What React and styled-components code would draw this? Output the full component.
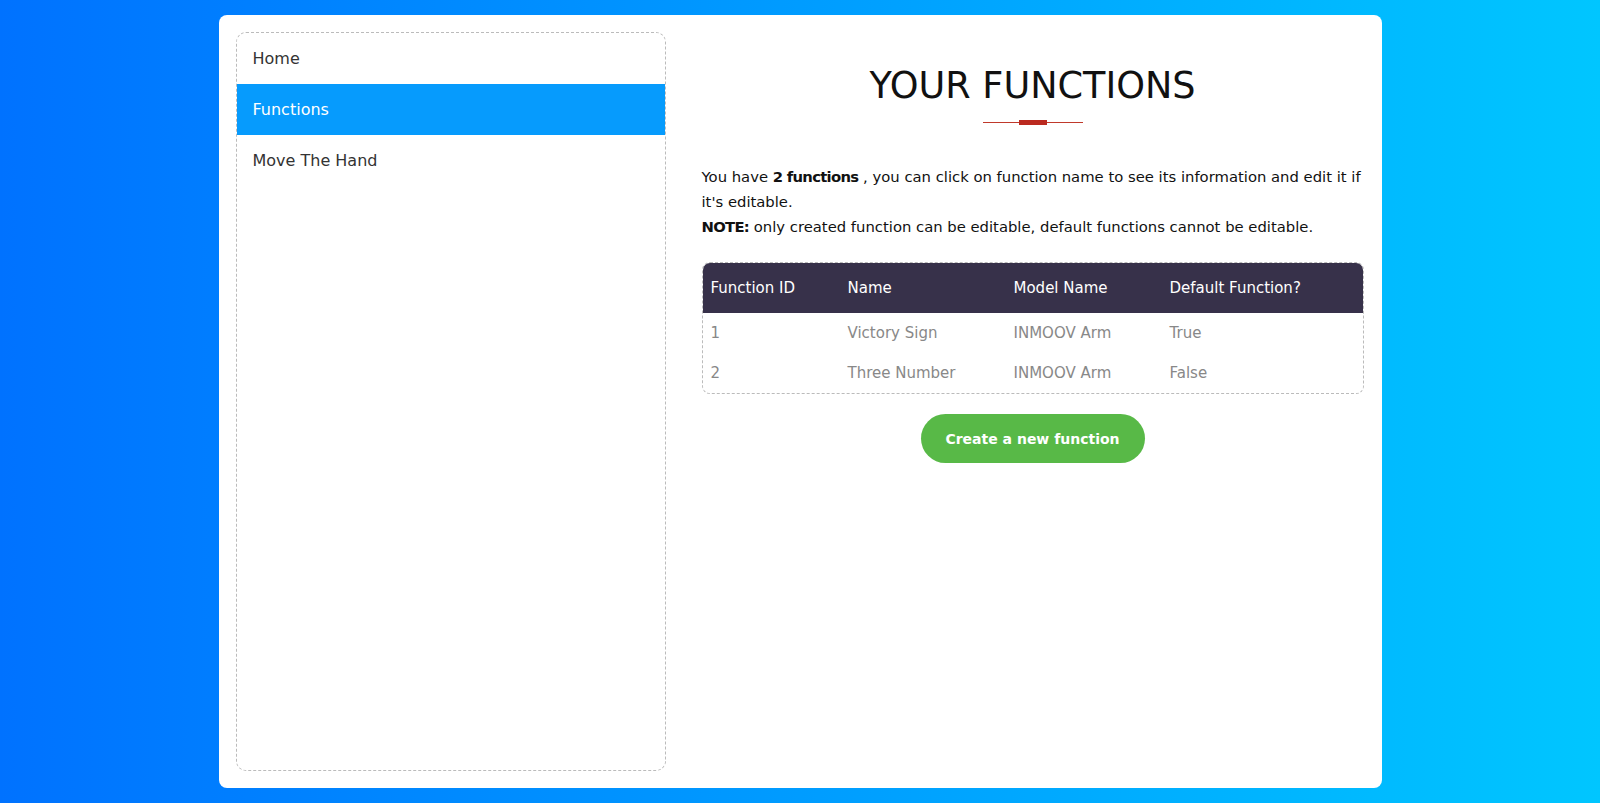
import React from 'react';
import styled, { createGlobalStyle } from 'styled-components';

const GlobalStyle = createGlobalStyle`
  * { box-sizing: border-box; }
  body {
    margin: 0;
    font-family: "DejaVu Sans", "Noto Sans", sans-serif;
    background: linear-gradient(to right, #0072ff, #00c6ff);
    min-height: 100vh;
  }
`;

const functions = [
  { id: 1, name: 'Victory Sign', model: 'INMOOV Arm', isDefault: 'True' },
  { id: 2, name: 'Three Number', model: 'INMOOV Arm', isDefault: 'False' },
];

const navItems = ['Home', 'Functions', 'Move The Hand'];

const App = () => {
  return <>
    <GlobalStyle />
    <Page>
      <Card>
        <Sidebar>
          {navItems.map(item => (
            <NavItem key={item} $active={item === 'Functions'}>{item}</NavItem>
          ))}
        </Sidebar>
        <Main>
          <Title>YOUR FUNCTIONS</Title>
          <Divider><span /></Divider>
          <Intro>
            You have <b>2 functions</b> , you can click on function name to see its information and edit it if it's editable.
            <br />
            <b>NOTE:</b> only created function can be editable, default functions cannot be editable.
          </Intro>
          <TableWrap>
            <Table>
              <thead>
                <tr>
                  <Th>Function ID</Th>
                  <Th>Name</Th>
                  <Th>Model Name</Th>
                  <Th>Default Function?</Th>
                </tr>
              </thead>
              <tbody>
                {functions.map(f => (
                  <tr key={f.id}>
                    <Td $w={137}>{f.id}</Td>
                    <Td $w={166}>{f.name}</Td>
                    <Td $w={156}>{f.model}</Td>
                    <Td>{f.isDefault}</Td>
                  </tr>
                ))}
              </tbody>
            </Table>
          </TableWrap>
          <CreateButton>Create a new function</CreateButton>
        </Main>
      </Card>
    </Page>
  </>
}

const Page = styled.div`
  padding: 15px 0;
  display: flex;
  justify-content: center;
`

const Card = styled.div`
  width: 1163px;
  height: 773px;
  background: #fff;
  border-radius: 8px;
  padding: 17px 18px 17px 17px;
  display: flex;
  gap: 36px;
`

const Sidebar = styled.nav`
  width: 430px;
  flex: none;
  border: 1px dashed #bbb;
  border-radius: 10px;
  overflow: hidden;
`

const NavItem = styled.div`
  height: 51px;
  display: flex;
  align-items: center;
  padding-left: 16px;
  font-size: 16px;
  color: ${p => (p.$active ? '#fff' : '#333')};
  background: ${p => (p.$active ? '#069bfd' : 'transparent')};
  cursor: pointer;
`

const Main = styled.div`
  flex: 1;
  display: flex;
  flex-direction: column;
  align-items: center;
`

const Title = styled.h1`
  margin: 32px 0 0;
  font-size: 36.6px;
  line-height: 44px;
  font-weight: 400;
  color: #111;
`

const Divider = styled.div`
  margin-top: 12px;
  width: 100px;
  height: 5px;
  position: relative;
  display: flex;
  align-items: center;
  justify-content: center;
  &::before {
    content: '';
    position: absolute;
    left: 0;
    right: 0;
    top: 2px;
    height: 1px;
    background: #c0392b;
  }
  span {
    width: 28px;
    height: 5px;
    background: #bb2a20;
    position: relative;
  }
`

const Intro = styled.p`
  margin: 39px 0 0;
  width: 100%;
  font-size: 14.8px;
  line-height: 25px;
  color: #111;
  b {
    font-weight: 700;
    letter-spacing: -0.7px;
  }
`

const TableWrap = styled.div`
  margin-top: 23px;
  width: 100%;
  border: 1px dashed #bbb;
  border-radius: 8px;
  overflow: hidden;
`

const Table = styled.table`
  width: 100%;
  border-collapse: collapse;
`

const Th = styled.th`
  background: #37314a;
  color: #fff;
  height: 50px;
  text-align: left;
  font-weight: 400;
  font-size: 15px;
  padding: 0 8px;
`

const Td = styled.td`
  width: ${p => (p.$w ? `${p.$w}px` : 'auto')};
  height: 40px;
  padding: 0 8px;
  font-size: 15px;
  font-weight: 400;
  color: #888;
`

const CreateButton = styled.button`
  margin-top: 20px;
  width: 224px;
  height: 49px;
  border: none;
  border-radius: 25px;
  background: #58b947;
  color: #fff;
  font-family: inherit;
  font-size: 14px;
  font-weight: 700;
  cursor: pointer;
`

export default App;
